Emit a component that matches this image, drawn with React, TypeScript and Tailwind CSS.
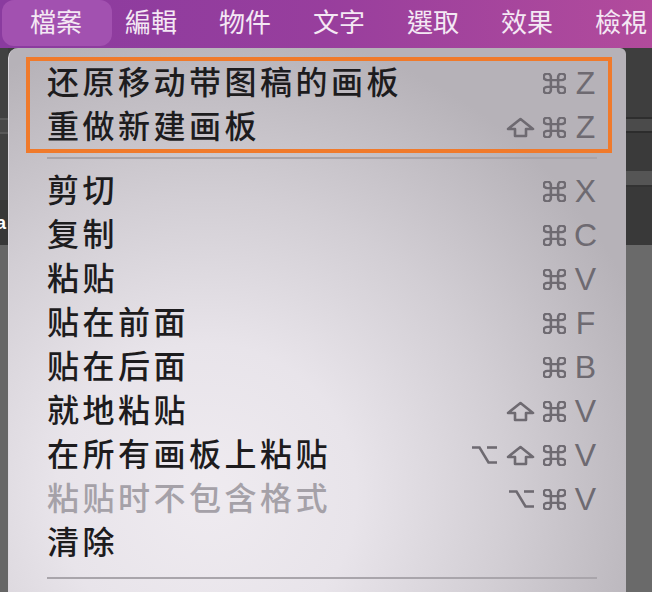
import React from "react"

type Key = "cmd" | "shift" | "opt" | string

const CmdIcon = () => (
	<svg width="23" height="21" viewBox="2.5 2.5 19 19" preserveAspectRatio="none" fill="none" stroke="currentColor" strokeWidth="2.1" strokeLinecap="round" strokeLinejoin="round">
		<path d="M15 6v12a3 3 0 1 0 3-3H6a3 3 0 1 0 3 3V6a3 3 0 1 0-3 3h12a3 3 0 1 0-3-3" />
	</svg>
)

const ShiftIcon = () => (
	<svg width="29" height="21" viewBox="0 0 29 21" fill="none" stroke="currentColor" strokeWidth="2.6" strokeLinejoin="round">
		<path d="M14.5 2 L27 12 H20 V19 H9 V12 H2 Z" />
	</svg>
)

const OptIcon = () => (
	<svg width="27" height="20" viewBox="0 0 27 20" fill="none" stroke="currentColor" strokeWidth="2.6" strokeLinecap="butt">
		<path d="M1 2.5 H8.5 L17.5 17.5 H26" />
		<path d="M16 2.5 H26" />
	</svg>
)

const Shortcut = ({ keys }: { keys: Key[] }) => (
	<div className="flex items-center gap-[8px] text-[#6e6a71]">
		{keys.map((k, i) => {
			if (k === "cmd") return <CmdIcon key={i} />
			if (k === "shift") return <ShiftIcon key={i} />
			if (k === "opt") return <OptIcon key={i} />
			return (
				<span key={i} className="inline-block w-[23px] text-center font-['Liberation_Sans',sans-serif] text-[32px] leading-none">
					{k}
				</span>
			)
		})}
	</div>
)

const MenuRow = ({ label, keys = [], disabled = false }: { label: string; keys?: Key[]; disabled?: boolean }) => (
	<div className="flex h-[44px] items-center justify-between">
		<span className={`pb-[6px] text-[32px] font-medium leading-none tracking-[3.5px] ${disabled ? "text-[#a5a1a8]" : "text-[#1d1c1e]"}`}>{label}</span>
		<Shortcut keys={keys} />
	</div>
)

const Separator = () => <div className="mx-[38px] mr-[29px] h-[2px] bg-[#a9a5ab]" />

const menus = ["編輯", "物件", "文字", "選取", "效果", "檢視"]

const App = () => {
	return (
		<div className="flex h-[592px] w-[652px] flex-col overflow-hidden bg-[#3c3c3c] font-['Noto_Sans_CJK_SC',sans-serif]">
			{/* menu bar */}
			<div className="flex h-[48px] shrink-0 items-start bg-gradient-to-r from-[#8a3b9f] via-[#983e9d] to-[#b24b9c] pl-[2px] font-['Noto_Sans_CJK_TC',sans-serif] text-[26px] text-[#f4e8f4]">
				<div className="flex h-[46px] items-center rounded-xl bg-[#a251b0] pb-[4px] pl-[28px] pr-[30px] leading-none">檔案</div>
				{menus.map((m, i) => (
					<div key={m} className={`flex h-[46px] items-center pb-[4px] leading-none ${i === 0 ? "ml-[13px]" : "ml-[42px]"}`}>
						{m}
					</div>
				))}
			</div>

			<div className="flex flex-1">
				{/* left strip of the canvas behind */}
				<div className="flex w-[8px] flex-col">
					<div className="h-[70px] bg-[#414141]" />
					<div className="h-[2px] bg-[#585858]" />
					<div className="h-[12px] bg-[#484848]" />
					<div className="h-[2px] bg-[#585858]" />
					<div className="h-[66px] bg-[#404040]" />
					<div className="flex h-[45px] items-center overflow-hidden bg-[#383838] text-[18px] font-bold leading-none text-white">
						<span className="-ml-[4px] font-['Liberation_Sans',sans-serif]">a</span>
					</div>
					<div className="flex-1 bg-[#666666]" />
				</div>

				{/* dropdown menu */}
				<div className="flex w-[618px] flex-col rounded-tl-[10px] rounded-tr-[6px] border-l border-[#dcd8de] bg-[radial-gradient(circle_at_32%_82%,#efebf0_0px,#e8e4ea_150px,#d2ced4_300px,#b6b2b8_470px)] pt-[9px]">
					<div className="mx-[17px] mr-[14px] border-4 border-[#f07a2b]">
						<div className="pl-[17px] pr-[11px]">
							<MenuRow label="还原移动带图稿的画板" keys={["cmd", "Z"]} />
							<MenuRow label="重做新建画板" keys={["shift", "cmd", "Z"]} />
						</div>
					</div>
					<div className="mt-[4px] mb-[10px]">
						<Separator />
					</div>
					<div className="pl-[38px] pr-[29px]">
						<MenuRow label="剪切" keys={["cmd", "X"]} />
						<MenuRow label="复制" keys={["cmd", "C"]} />
						<MenuRow label="粘贴" keys={["cmd", "V"]} />
						<MenuRow label="贴在前面" keys={["cmd", "F"]} />
						<MenuRow label="贴在后面" keys={["cmd", "B"]} />
						<MenuRow label="就地粘贴" keys={["shift", "cmd", "V"]} />
						<MenuRow label="在所有画板上粘贴" keys={["opt", "shift", "cmd", "V"]} />
						<MenuRow label="粘贴时不包含格式" keys={["opt", "cmd", "V"]} disabled />
						<MenuRow label="清除" />
					</div>
					<div className="mt-[12px]">
						<Separator />
					</div>
				</div>

				{/* right strip of the canvas behind */}
				<div className="flex flex-1 flex-col">
					<div className="h-[69px] bg-[#3e3e3e]" />
					<div className="h-[2px] bg-[#2e2e2e]" />
					<div className="h-[12px] bg-[#4b4b4b]" />
					<div className="h-[2px] bg-[#2c2c2c]" />
					<div className="h-[38px] bg-[#3a3a3a]" />
					<div className="h-[14px] bg-[#555555]" />
					<div className="h-[2px] bg-[#333333]" />
					<div className="h-[58px] bg-[#393939]" />
					<div className="flex-1 bg-[#6a6a6a]" />
				</div>
			</div>
		</div>
	)
}

export default App
